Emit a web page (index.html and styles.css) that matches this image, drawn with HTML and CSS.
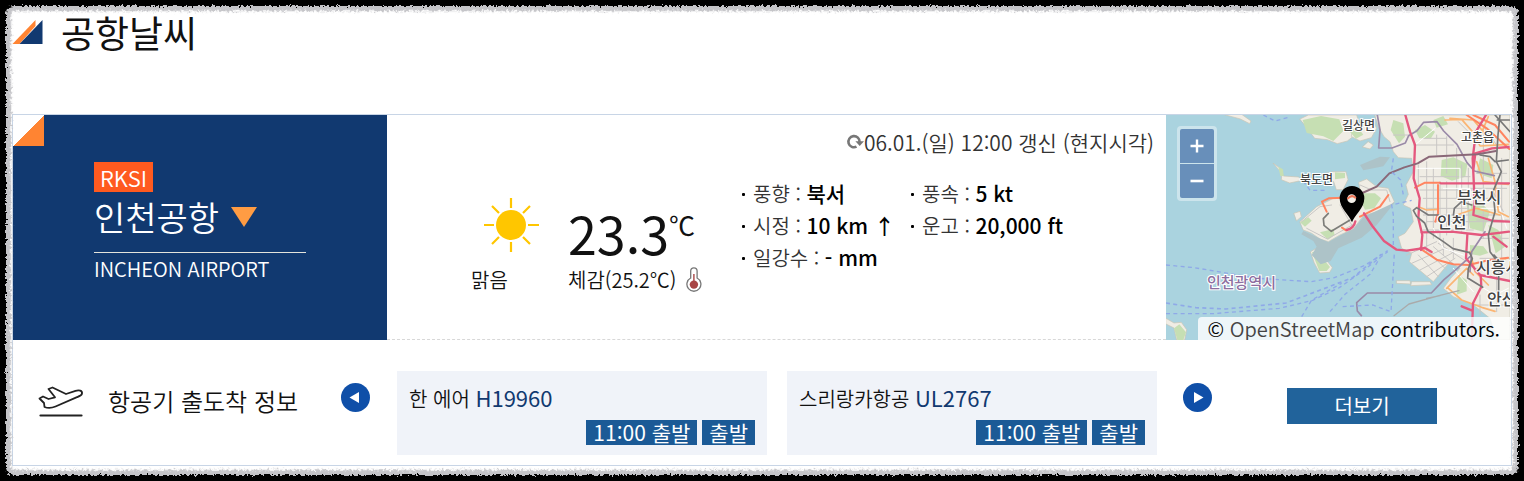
FILE: index.html
```html
<!DOCTYPE html>
<html lang="ko">
<head>
<meta charset="utf-8">
<meta name="viewport" content="width=device-width, initial-scale=1">
<title>공항날씨</title>
<link rel="stylesheet" href="styles.css">
</head>
<body>
<svg class="defs" width="0" height="0" aria-hidden="true">
  <filter id="torn" x="0" y="0" width="100%" height="100%" color-interpolation-filters="sRGB">
    <feTurbulence type="fractalNoise" baseFrequency="0.4" numOctaves="3" seed="4"/>
    <feDisplacementMap in="SourceGraphic" scale="6" xChannelSelector="R" yChannelSelector="G"/>
  </filter>
</svg>
<main class="page">
  <header class="heading">
    <svg class="heading-mark" viewBox="0 0 30 24" aria-hidden="true"><path fill="#ff8432" d="M0 24 23 0v6L7 24z"/><path fill="#113970" d="M7 24 30 0v24z"/></svg>
    <h1>공항날씨</h1>
  </header>

  <section class="card">
    <div class="weather">
      <div class="airport">
        <span class="code">RKSI</span>
        <button class="airport-name" type="button">인천공항
          <svg class="caret" viewBox="0 0 26 20" aria-hidden="true"><path fill="#ff9c43" d="M0 0h26L13 20z"/></svg>
        </button>
        <p class="airport-en">INCHEON AIRPORT</p>
      </div>

      <div class="current">
        <p class="updated">
          <svg class="refresh" viewBox="0 0 18 16" aria-hidden="true"><path fill="none" stroke="#777" stroke-width="2.6" d="M10.5 12.7A5.6 5.6 0 1 1 13.6 8"/><path fill="#777" d="M9.4 7.2H18L13.7 12z"/></svg>06.01.(일) 12:00 갱신 (현지시각)
        </p>
        <div class="readings">
          <div class="sky">
            <svg class="sun" viewBox="-28 -28 56 56" aria-hidden="true"><circle r="15" fill="#ffc600"/><path stroke="#ffc600" stroke-width="2.2" d="M0-27v10M0 17v10M-27 0h10M17 0h11M-19-19l7 7M12 12l7 7M-19 19l7-7M12-12l7-7"/></svg>
            <span>맑음</span>
          </div>
          <div class="temperature">
            <p class="degrees">23.3<sup>℃</sup></p>
            <p class="feels">체감(25.2℃)
              <svg class="thermometer" viewBox="0 0 16 26" aria-hidden="true"><path fill="#fff" stroke="#777" stroke-width="1.3" d="M4.7 11V4a3.2 3.2 0 0 1 6.4 0v7a7 7 0 1 1-6.4 0z"/><circle cx="7.9" cy="17.6" r="4.2" fill="#a84545"/><path stroke="#a84545" stroke-width="1.4" d="M7.9 7v10"/></svg>
            </p>
          </div>
          <ul class="details">
            <li>풍향 : <strong>북서</strong></li>
            <li>풍속 : <strong>5 kt</strong></li>
            <li>시정 : <strong>10 km ↑</strong></li>
            <li>운고 : <strong>20,000 ft</strong></li>
            <li>일강수 : <strong>- mm</strong></li>
          </ul>
        </div>
      </div>

      <div class="map">
        <svg class="map-tiles" viewBox="0 0 344 225" preserveAspectRatio="xMinYMid slice" role="img" aria-label="인천공항 지도">
          <rect width="344" height="225" fill="#aad3df"/>
          <g transform="scale(.33333) translate(-18 -30)" stroke-linejoin="round" stroke-linecap="round">
            <g fill="#f0ede5" stroke="#c9c4b4" stroke-width="2">
              <path d="M420 42 445 30h145l8 26-8 30-28 22-30 8-30-12-38-4-22-30z"/>
              <path d="M580 60 640 50 650 70 634 98 600 108 575 95z"/>
              <path d="M625 110l15 10-10 12-22-6z"/>
              <path d="M645 30H1050V705H1010L990 640 940 600 880 575 850 550 872 520 900 490 870 470 820 530 748 470 755 445 725 430 715 395 735 385 760 350 752 310 730 300 745 268 738 240 760 200 755 160 715 158 700 140 690 110 672 95 655 65z"/>
              <path d="M340 175l25 18 5 20 45 3 12 10-38 8-25-10 2-18z"/>
              <path d="M495 205l25-5 38 0 6 24-15 30-20 0-8-24-25-10z"/>
              <path d="M420 350 470 305 520 280 570 268 600 255 596 232 620 222 650 245 685 250 703 290 680 312 610 332 580 372 540 390 505 410 480 402 455 385 430 375z"/>
              <path d="M402 325l18-6 4 16-14 12z"/>
              <path d="M452 440l20-12 15 4 8 28 22 28-8 14-30 2-16-30z"/>
              <path d="M710 527h40l2 10-42-2z M755 530h55l5 9-62 3z"/>
              <path d="M190 28h55l28 20-4 8-28-14z"/>
              <path d="M18 640l24 14 22-2 16 22-6 31H50l-8-36-24-12z"/>
            </g>
            <g fill="#c6dfb3">
              <path d="M428 45l55-12 55 10 12 35-30 30-30-14-50-10z"/>
              <path d="M565 75l30-6 15 20-22 12z"/>
              <path d="M845 165l35-8 42 20-6 38-40 12-34-14z"/>
              <path d="M610 265l35 0 18 15-20 30-28 4-10-20z"/>
              <path d="M456 442l24-6 10 26 20 24-10 12-22 0z"/>
              <path d="M420 352l25-15 10 10-20 18z M480 382l40-10 4 18-20 14z"/>
              <path d="M700 45l30 10 5 40-18 20-25-40z M765 75l30-15 30 20-12 20-35 0z"/>
              <path d="M920 300l40-10 30 30-20 60-40-10z M930 420l40 4 15 20-25 8-30-5z"/>
              <path d="M960 160l40 20-5 40-45-15z M820 45l30-12 14 25-34 10z M985 360l30 15 20 50-28 20z M895 510l25 15 0 34-30 10z"/>
              <path d="M42 670l16-12 20 24-8 23H52z M355 185l14 8 2 20-10 0z M525 202l30 2 0 15-30 4z"/>
            </g>
            <g fill="#adc3c8">
              <path d="M600 180l60-25 30 2-20 27-60 12z"/>
              <path d="M705 292 612 335 580 372 540 392 505 412 430 378 424 388 460 408 470 425 455 450 482 478 512 468 535 430 605 398 650 360z"/>
            </g>
            <g fill="none" stroke="#c9c7c5" stroke-width="3">
              <path d="M800 170v230M820 190v210M840 230v170M860 230v160M905 180v200M925 190v180M780 215h150M780 255h160M790 280h230M800 310h130M790 330h240M800 350h230M790 375h150M760 120h120M790 100h70M830 90v60M860 95v110M970 60v340M1025 160v300M950 205h90M950 345h95M960 400h85M880 400v60M850 400v50M800 400v40M835 415l85 55M740 450l90 -40M755 475l100-45M780 495l95-50M800 515l85-55M775 450l60 65M800 435l60 60M820 425l58 50M960 460h90M950 490h100M960 570v60M1010 500v120M930 600h115M960 50l50 70M895 50l50 50M700 90h55M890 130v150M775 180v60M930 250h110M1000 260l30 60"/>
              <path d="M425 350l55-45 35-5M440 370l62 32 80-45M540 300l35 60M600 240l35 15 45 0 10 35"/>
            </g>
            <g fill="none" stroke="#fff" stroke-width="3">
              <path d="M770 190l130 0 0 90M850 250h80v60M765 120l60-50M960 310h60l20 60M820 370l30 60 60 20M955 540l50 30 40-20M880 490l60 70"/>
            </g>
            <g fill="none" stroke="#fbb573" stroke-width="5">
              <path d="M855 45l50-2 35 40 20 40 85-5M870 40l70 5 60 70M985 35l-25 60M950 170l20 60 75 8M890 330l60-20 70 20M775 305l25 10 35-2M860 550l60-60 20 20M865 550l40 35 60 22 40 12M985 160l20 70 10 90 30 15M1010 470l35-12M930 440l15 60 40 40"/>
            </g>
            <g fill="none" stroke="#ff8460" stroke-width="6">
              <path d="M765 248l30-15h45M834 240v85l-8 25M780 430l50 34 50 14 46 2 58-14 60-8M920 30l60 40 68 62M940 30l65 30 42 50M500 320l-14-30 20-10 50-2M600 335l60-30 25-35M546 368l12 8"/>
            </g>
            <g fill="none" stroke="#9a8aa8" stroke-width="5">
              <path d="M652 30l8 45-4 54h40l40-15 10-22 25-15 20-25 40-2 20 28 40 40 30 55 22 25 60 14"/>
              <path d="M592 618l-2-25 32-29h192l38-40 40-34 38-35M592 618l12 14M975 380l-40 60-5 60"/>
            </g>
            <path fill="none" stroke="#aaa" stroke-width="4" d="M702 632l45-35 90-25 60-15M840 572l-40 8"/>
            <g fill="none" stroke="#e4587e" stroke-width="7">
              <path d="M736 30l14 50 15 40-4 100 18 60-4 60 12 50-4 45"/>
              <path d="M612 325l25 38 35 45 38 26 30 3 55-8 20 12"/>
              <path d="M842 235l205 0M785 382l90-2 90 10 82-10M922 390l-4 70 42 50 90 18M935 705l4-110 25-50-2-35M560 375q22-4 26-26"/>
              <path d="M978 30l-30 50-10 80 6 130-4 40 60 18 48 2M940 195l6-50 50-15 50-4M905 604l30 12M1000 395l40 30"/>
            </g>
            <path fill="none" stroke="#8a6878" stroke-width="6" d="M600 267l50-22 38-40 45-18 40-12 35-20 85-4 60-3 55-10"/>
            <g fill="none" stroke="#777" stroke-width="5">
              <path d="M835 330l-30 0-35-22-10 8 10 18 24 20 10 25 45 30 30 22 50 12 8 18-12 30-2 28 45 28"/>
              <path d="M1005 30l45 50M1012 45h36M1020 30l-6 60-5 80 15 30-25 60 6 60-20 70 5 50 15 20M935 300l-30-10-22 20-4 30M960 150l30 5 15 15 40-5M1002 450l18 20-4 40 0 80"/>
              <path d="M505 325l-15 16 2 20 22 18 55-33" stroke="#7c7c78"/>
            </g>
            <g fill="none" stroke="#8fa9e8" stroke-width="4" stroke-dasharray="12 10" stroke-linecap="butt">
              <path d="M18 480l85 8 190 32 160 10 70-12 90-36 70-45"/>
              <path d="M18 594l90 14 90 4 180-18 90-34 110-42 85-70" stroke-width="5"/>
              <path d="M18 626l140 0 200-16 100-24 80-38 70-50 75-58M425 635l30-50 90-50M510 620l45-52 75-60 30-50M548 605l90-5 55 20 10-175M700 420v-90l-5-30 60-14M700 160l-6 40 28 25 8 45M310 30l35 18 45-12M430 228l20 28 50 0"/>
            </g>
            <path d="M576 352c-8-22-37-42-37-72a37 37 0 0 1 74 0c0 30-29 50-37 72z" fill="#000"/>
            <circle cx="575" cy="281" r="13" fill="#f2efe9"/>
            <path d="M564 280q11-12 22-2" fill="none" stroke="#ef7657" stroke-width="6"/>
          </g>
          <g class="places">
            <text x="176" y="15">길상면</text>
            <text x="295" y="27">고촌읍</text>
            <text x="134" y="69">북도면</text>
            <text class="city" x="291" y="88">부천시</text>
            <text class="city" x="271" y="113">인천</text>
            <text class="city" x="310" y="158">시흥시</text>
            <text class="city" x="321" y="190">안산시</text>
            <text class="region" x="41" y="173">인천광역시</text>
          </g>
        </svg>
        <div class="zoom">
          <button type="button" aria-label="확대"><svg viewBox="0 0 14 14" aria-hidden="true"><path stroke="#fff" stroke-width="2.4" d="M7 .5v13M.5 7h13"/></svg></button>
          <button type="button" aria-label="축소"><svg viewBox="0 0 14 14" aria-hidden="true"><path stroke="#fff" stroke-width="2.6" d="M.5 7h13"/></svg></button>
        </div>
        <p class="attribution">© <a href="#">OpenStreetMap</a> contributors.</p>
      </div>
    </div>

    <div class="flights">
      <h2>
        <svg class="plane" viewBox="0 0 46 32" aria-hidden="true" fill="none" stroke="#222" stroke-width="1.8" stroke-linejoin="round" stroke-linecap="round"><path d="M1.500 13.500 5 11.500 10.500 14 17 12.300 10.500 4 14.500 2.500 28 9 37.500 5.800C41 4.800 44.500 5.500 44 8.500 43.700 10.400 41.500 11.200 39 12.200L17.500 21.500C14 23 9.500 23.200 6.500 22L6 18z"/><path d="M2.500 30.500h41" stroke-width="2.200"/></svg>
        항공기 출도착 정보
      </h2>
      <button class="arrow" type="button" aria-label="이전"><svg viewBox="0 0 29 29" aria-hidden="true"><path fill="#fff" d="M8.500 14.500 18 9v11z"/></svg></button>
      <ul class="flight-list">
        <li class="flight">
          <p>한 에어 <b>H19960</b></p>
          <div class="status"><span>11:00 출발</span><span>출발</span></div>
        </li>
        <li class="flight">
          <p>스리랑카항공 <b>UL2767</b></p>
          <div class="status"><span>11:00 출발</span><span>출발</span></div>
        </li>
      </ul>
      <button class="arrow" type="button" aria-label="다음"><svg viewBox="0 0 29 29" aria-hidden="true"><path fill="#fff" d="M20.500 14.500 11 9v11z"/></svg></button>
      <a class="more" href="#">더보기</a>
    </div>
  </section>
</main>
<div class="paper-edge" aria-hidden="true"></div>
</body>
</html>
```
FILE: styles.css
```css
* {
  box-sizing: border-box;
}

body {
  margin: 0;
  background: #fff;
  color: #111;
  font-family: "Noto Sans CJK KR", sans-serif;
  font-size: 20px;
  font-weight: 350;
  line-height: 32px;
}

h1, h2, p, ul {
  margin: 0;
  padding: 0;
  font-weight: inherit;
}

ul {
  list-style: none;
}

button {
  border: 0;
  padding: 0;
  background: none;
  color: inherit;
  font: inherit;
  cursor: pointer;
}

a {
  color: inherit;
  text-decoration: none;
}

svg {
  display: block;
  flex: none;
}

.defs {
  position: absolute;
}

.page {
  padding: 8px 12px 15px;
}

.paper-edge {
  position: fixed;
  inset: -8px;
  border: 15px solid #000;
  pointer-events: none;
  filter: url(#torn);
}

.paper-edge::after {
  content: "";
  position: absolute;
  inset: -1px;
  border-radius: 8px;
  box-shadow: 0 0 0 4px #000, inset 0 0 2px 5px #c4c4c8;
}

.heading {
  display: flex;
  align-items: center;
  gap: 18px;
  height: 48px;
  margin-bottom: 58px;
}

.heading-mark {
  width: 31px;
  height: 24px;
}

h1 {
  font-size: 37px;
  font-weight: 400;
  line-height: 48px;
}

.card {
  border: 1px solid #c8d5e6;
}

.weather {
  display: grid;
  grid-template-columns: 374px 1fr 345px;
  min-height: 225px;
}

.airport {
  display: flex;
  flex-direction: column;
  align-items: flex-start;
  padding: 47px 81px 0;
  background: linear-gradient(135deg, #fff 22px, #ff8432 22px) 0 0 / 31px 31px no-repeat #113970;
  color: #fff;
}

.code {
  padding: 0 6px;
  background: #ff5a1f;
  font-size: 22px;
  line-height: 30px;
}

.airport-name {
  display: flex;
  align-items: center;
  gap: 12px;
  font-size: 34px;
  line-height: 50px;
}

.caret {
  width: 26px;
  height: 20px;
}

.airport-en {
  width: 100%;
  margin-top: 10px;
  border-top: 1px solid #e4e4dc;
}

.current {
  padding: 11px 12px 0 84px;
  border-bottom: 1px dashed #d8d8d8;
}

.updated {
  display: flex;
  align-items: center;
  justify-content: flex-end;
  color: #333;
  font-size: 21px;
}

.refresh {
  width: 18px;
  height: 16px;
}

.readings {
  display: flex;
  align-items: flex-start;
  padding-top: 19px;
}

.sky {
  display: flex;
  flex-direction: column;
  width: 97px;
  padding-top: 20px;
}

.sun {
  width: 56px;
  height: 56px;
  margin: 0 0 11px 12px;
}

.temperature {
  width: 173px;
  padding-top: 25px;
}

.degrees {
  display: flex;
  align-items: flex-start;
  font-size: 52px;
  font-weight: 400;
  line-height: 62px;
}

.degrees sup {
  font-size: 26px;
  line-height: 46px;
}

.feels {
  display: flex;
  align-items: center;
  gap: 10px;
}

.thermometer {
  width: 16px;
  height: 26px;
}

.details {
  display: grid;
  grid-template-columns: 169px auto;
  white-space: nowrap;
  color: #333;
}

.details li {
  height: 32px;
}

.details li::before {
  content: "";
  display: inline-block;
  width: 3px;
  height: 3px;
  margin: 0 8px 6px 1px;
  border-radius: 1px;
  background: #000;
}

.details strong {
  color: #000;
  font-size: 21px;
  font-weight: 500;
}

.map {
  position: relative;
  padding-right: 1px;
  overflow: hidden;
}

.map-tiles {
  width: 100%;
  height: 100%;
}

.places {
  fill: #444;
  stroke: #fff;
  stroke-width: 2px;
  paint-order: stroke;
  font-size: 12px;
  font-weight: 500;
}

.places .city {
  font-size: 16px;
}

.places .region {
  fill: #8d6f9f;
  font-size: 15px;
}

.zoom {
  position: absolute;
  top: 11px;
  left: 11px;
  display: grid;
  gap: 1px;
  padding: 3px;
  border-radius: 4px;
  background: rgba(255, 255, 255, .4);
}

.zoom button {
  display: grid;
  place-items: center;
  width: 34px;
  height: 34px;
  border-radius: 2px 2px 0 0;
  background: #688fba;
}

.zoom button:last-child {
  border-radius: 0 0 2px 2px;
}

.zoom svg {
  width: 14px;
  height: 14px;
}

.attribution {
  position: absolute;
  right: 1px;
  bottom: 0;
  height: 23px;
  padding: 0 10px;
  border-radius: 4px 0 0;
  background: rgba(255, 255, 255, .8);
  color: #000;
  line-height: 23px;
  white-space: nowrap;
}

.attribution a {
  color: #444;
}

.flights {
  display: flex;
  align-items: flex-start;
  padding: 31px 74px 10px 25px;
}

.flights h2 {
  display: flex;
  align-items: center;
  gap: 24px;
  width: 303px;
  height: 60px;
  font-size: 24px;
}

.plane {
  width: 46px;
  height: 32px;
}

.arrow {
  flex: none;
  width: 29px;
  height: 29px;
  margin-top: 12px;
  border-radius: 50%;
  background: #0f4fa8;
}

.flight-list {
  display: grid;
  flex: 1;
  grid-template-columns: 1fr 1fr;
  gap: 20px;
  margin: 0 26px 0 27px;
}

.flight {
  padding: 10px 12px;
  background: #f0f3f9;
}

.flight p {
  height: 32px;
  margin-bottom: 7px;
}

.flight b {
  color: #113970;
  font-size: 22px;
  font-weight: 400;
}

.status {
  display: flex;
  justify-content: flex-end;
  gap: 5px;
}

.status span {
  padding: 0 7px;
  background: #1b5a96;
  color: #fff;
  font-size: 21px;
  font-weight: 400;
  line-height: 25px;
}

.more {
  width: 150px;
  margin: 17px 0 0 75px;
  background: #21639b;
  color: #fff;
  font-weight: 400;
  line-height: 36px;
  text-align: center;
}
```
